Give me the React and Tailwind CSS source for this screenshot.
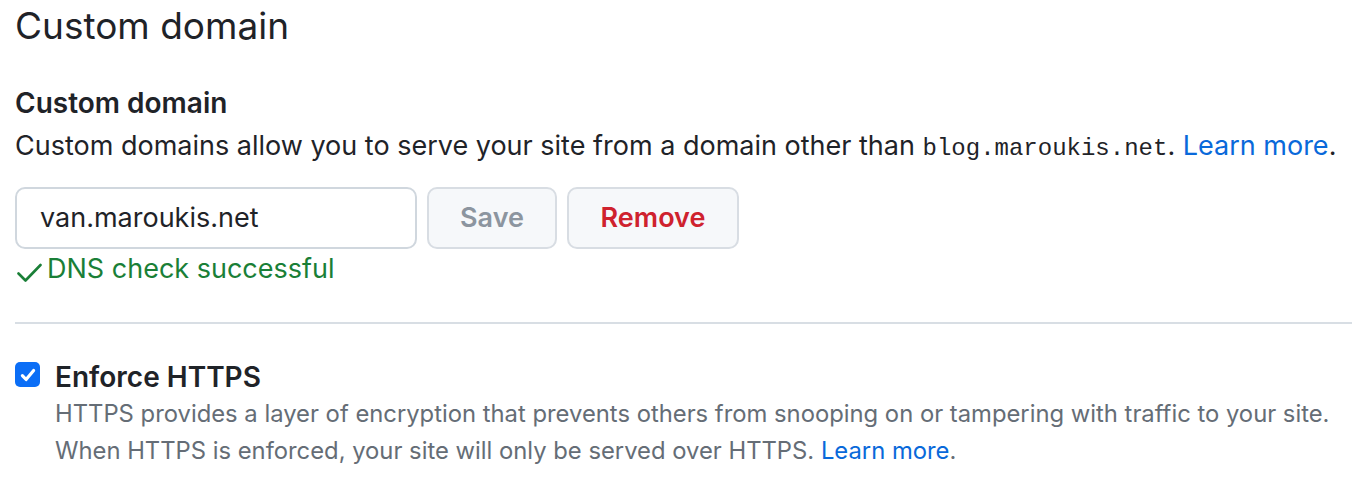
import React from 'react';

const font = { fontFamily: 'Inter, "Noto Sans", sans-serif' };

const App = () => {
  return (
    <div className="bg-white min-h-[484px] pl-[15px] text-[#1f2328]" style={font}>
      <h2 className="pt-[2px] text-[37px] leading-[48px] font-normal">Custom domain</h2>

      <div className="mt-[35px]">
        <h3 className="text-[28px] leading-[36px] font-semibold">Custom domain</h3>
        <p className="mt-[7px] h-[36px] text-[27px] leading-[36px] whitespace-nowrap">
          Custom domains allow you to serve your site from a domain other than{' '}
          <code className="font-['Liberation_Mono',monospace] text-[24px] leading-none">blog.maroukis.net</code>.{' '}
          <a href="#" className="text-[#0969da]">Learn more</a>.
        </p>

        <div className="mt-[23px] flex gap-[10px]">
          <div className="w-[402px] h-[62px] rounded-[10px] border-2 border-[#d0d7de] flex items-center px-[23px] text-[27px]">
            van.maroukis.net
          </div>
          <button className="w-[130px] h-[62px] rounded-[10px] border-2 border-[#d8dde3] bg-[#f6f8fa] text-[27px] font-semibold text-[#8c959f]">
            Save
          </button>
          <button className="w-[172px] h-[62px] rounded-[10px] border-2 border-[#d8dde3] bg-[#f6f8fa] text-[27px] font-semibold text-[#cf222e]">
            Remove
          </button>
        </div>

        <div className="mt-[2px] flex text-[27px] leading-[36px] text-[#1a7f37]">
          <svg width="25" height="19" viewBox="0 0 25 19" fill="none" stroke="currentColor" strokeWidth="2.6" strokeLinecap="round" strokeLinejoin="round" className="ml-[2px] mr-[5px] mt-[12px] shrink-0">
            <path d="M1.5 10.5l7 7L23.5 2" />
          </svg>
          DNS check successful
        </div>
      </div>

      <div className="mt-[35px] h-[2px] bg-[#d8dee4]" />

      <div className="mt-[38px] flex">
        <div className="w-[25px] h-[25px] rounded-[5px] bg-[#0b6ef6] flex items-center justify-center shrink-0">
          <svg width="18" height="18" viewBox="0 0 16 16" fill="none" stroke="white" strokeWidth="2.8" strokeLinecap="round" strokeLinejoin="round">
            <path d="M3 8.5l3.3 3.5L13 4" />
          </svg>
        </div>
        <div className="ml-[15px]">
          <div className="text-[28px] leading-[30px] font-semibold">Enforce HTTPS</div>
          <p className="mt-[3px] text-[23.8px] leading-[37px] text-[#656d76] whitespace-nowrap">
            HTTPS provides a layer of encryption that prevents others from snooping on or tampering with traffic to your site.
            <br />
            When HTTPS is enforced, your site will only be served over HTTPS.{' '}
            <a href="#" className="text-[#0969da]">Learn more</a>.
          </p>
        </div>
      </div>
    </div>
  );
};

export default App;
